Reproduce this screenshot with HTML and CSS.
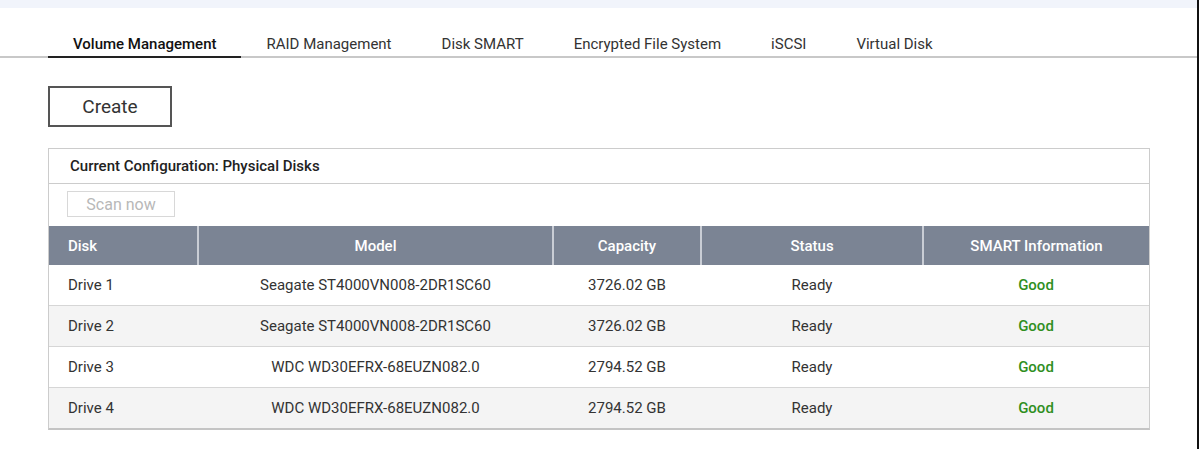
FILE: index.html
```html
<!DOCTYPE html>
<html>
<head>
<meta charset="utf-8">
<link rel="stylesheet" href="styles.css">
</head>
<body>
<div class="page">
  <div class="topbar"></div>
  <nav class="tabs">
    <div class="tab active">Volume Management</div>
    <div class="tab">RAID Management</div>
    <div class="tab">Disk SMART</div>
    <div class="tab">Encrypted File System</div>
    <div class="tab">iSCSI</div>
    <div class="tab">Virtual Disk</div>
  </nav>
  <div class="actions">
    <button class="btn-create">Create</button>
  </div>
  <section class="panel">
    <div class="panel-title">Current Configuration: Physical Disks</div>
    <div class="panel-tools">
      <button class="btn-scan" disabled>Scan now</button>
    </div>
    <table class="disks">
      <colgroup>
        <col class="c-disk"><col class="c-model"><col class="c-cap"><col class="c-status"><col class="c-smart">
      </colgroup>
      <thead>
        <tr><th class="left">Disk</th><th>Model</th><th>Capacity</th><th>Status</th><th>SMART Information</th></tr>
      </thead>
      <tbody>
        <tr><td class="left">Drive 1</td><td>Seagate ST4000VN008-2DR1SC60</td><td>3726.02 GB</td><td>Ready</td><td class="good">Good</td></tr>
        <tr><td class="left">Drive 2</td><td>Seagate ST4000VN008-2DR1SC60</td><td>3726.02 GB</td><td>Ready</td><td class="good">Good</td></tr>
        <tr><td class="left">Drive 3</td><td>WDC WD30EFRX-68EUZN082.0</td><td>2794.52 GB</td><td>Ready</td><td class="good">Good</td></tr>
        <tr><td class="left">Drive 4</td><td>WDC WD30EFRX-68EUZN082.0</td><td>2794.52 GB</td><td>Ready</td><td class="good">Good</td></tr>
      </tbody>
    </table>
  </section>
</div>
</body>
</html>
```
FILE: styles.css
```css
html, body {
  margin: 0;
  padding: 0;
  background: #ffffff;
}
body {
  font-family: Roboto, "Liberation Sans", sans-serif;
  color: #333333;
  height: 449px;
  overflow: hidden;
}
.page {
  height: 449px;
  width: 1199px;
  border-right: 2px solid #111111;
  box-sizing: border-box;
}
.topbar {
  height: 8px;
  background: #f1f4fb;
}
.tabs {
  display: flex;
  padding-left: 48px;
  margin-top: 22px;
  border-bottom: 2px solid #c8c8c8;
  height: 26px;
}
.tab {
  padding: 0 25px;
  font-size: 15px;
  line-height: 28px;
  color: #333333;
  white-space: nowrap;
}
.tab.active {
  font-weight: 500;
  color: #111111;
  border-bottom: 2px solid #222222;
  height: 26px;
}
.actions {
  padding-left: 48px;
  margin-top: 28px;
}
.btn-create {
  width: 124px;
  height: 41px;
  border: 2px solid #555555;
  background: #ffffff;
  font-family: Roboto, "Liberation Sans", sans-serif;
  font-size: 19px;
  color: #333333;
  padding: 0;
  cursor: pointer;
}
.panel {
  margin: 21px 0 0 48px;
  width: 1102px;
  border: 1px solid #cccccc;
  border-bottom: 2px solid #c4c4c4;
  box-sizing: border-box;
}
.panel-title {
  height: 34px;
  line-height: 34px;
  padding-left: 21px;
  font-size: 15px;
  font-weight: 500;
  color: #222222;
  border-bottom: 1px solid #cccccc;
}
.panel-tools {
  height: 42px;
  padding: 7px 0 0 18px;
  box-sizing: border-box;
}
.btn-scan {
  width: 108px;
  height: 26px;
  border: 1px solid #d8d8d8;
  background: #ffffff;
  font-family: Roboto, "Liberation Sans", sans-serif;
  font-size: 16px;
  color: #b8b8b8;
  padding: 0;
}
.disks {
  width: 100%;
  border-collapse: collapse;
  table-layout: fixed;
  font-size: 15px;
}
.c-disk { width: 149px; }
.c-model { width: 355px; }
.c-cap { width: 148px; }
.c-status { width: 222px; }
.c-smart { width: auto; }
.disks th {
  background: #7b8494;
  color: #ffffff;
  font-weight: 500;
  height: 39px;
  padding: 0;
  text-align: center;
  border-left: 2px solid #c9cdd5;
}
.disks th:first-child { border-left: none; }
.disks td {
  height: 40px;
  padding: 0;
  text-align: center;
  color: #333333;
  border-top: 1px solid #d6d6d6;
}
.disks tbody tr:first-child td { border-top: none; }
.disks tbody tr:nth-child(even) td { background: #f4f4f4; }
.disks .left { text-align: left; padding-left: 19px; }
.disks .good { color: #2f8f1f; font-weight: 500; }
```
